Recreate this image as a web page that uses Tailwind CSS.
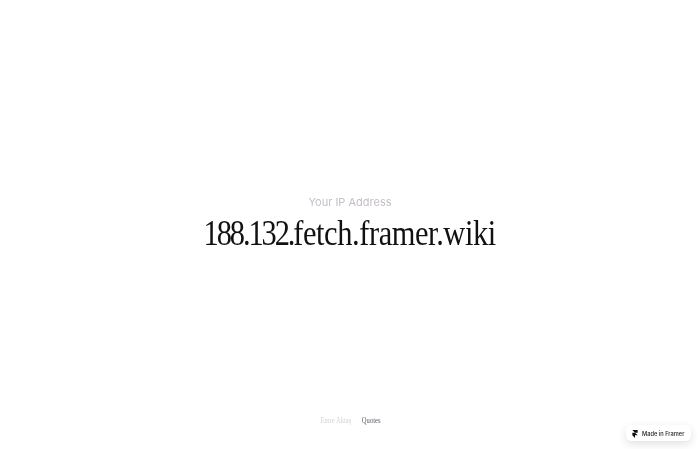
<!DOCTYPE html>
<html lang="en">
  <head>
    <meta charset="UTF-8" />
    <title>Your IP Address</title>
    <script src="https://cdn.jsdelivr.net/npm/@tailwindcss/browser@4"></script>
  </head>
  <body class="bg-white">
    <main class="relative flex h-[449px] w-[700px] flex-col items-center overflow-hidden">
      <section class="flex flex-col items-center pt-[194px]">
        <p class="font-['Inter',sans-serif] text-[11px] leading-[16px] text-[#c4bfc6] blur-[0.2px]">Your IP Address</p>
        <h1 class="mt-[2px] scale-x-[0.846] font-['Liberation_Serif',serif] text-[36px] leading-[42px] tracking-[-0.5px] text-[#111111] whitespace-nowrap blur-[0.2px]"><span class="tracking-[-2.5px]">188.132.</span>fetch.framer.wiki</h1>
      </section>

      <nav class="mt-auto mb-[22px] flex scale-x-[0.82] gap-[13px] pl-[2px] font-['Liberation_Serif',serif] text-[8px] leading-[12px] blur-[0.4px]">
        <a href="#" class="text-[#d6d2d8]">Emre Aktaş</a>
        <a href="#" class="text-[#5f5963]">Quotes</a>
      </nav>

      <!-- framer badge -->
      <a href="#" class="absolute right-[9px] bottom-[8px] flex h-[16px] w-[65px] items-center gap-[4px] rounded-[5px] bg-white pt-[1px] pl-[6px] shadow-[0_3px_8px_rgba(0,0,0,0.12)]">
        <svg class="h-[8px] w-[6px] blur-[0.2px]" viewBox="0 0 6 9" fill="#111111">
          <path d="M0 0h6v3H3zM0 3h3l3 3H3v3L0 6z" />
        </svg>
        <span class="font-['Inter',sans-serif] text-[5.7px] font-medium leading-[8px] text-[#222222] whitespace-nowrap blur-[0.2px]">Made in Framer</span>
      </a>
    </main>
  </body>
</html>
